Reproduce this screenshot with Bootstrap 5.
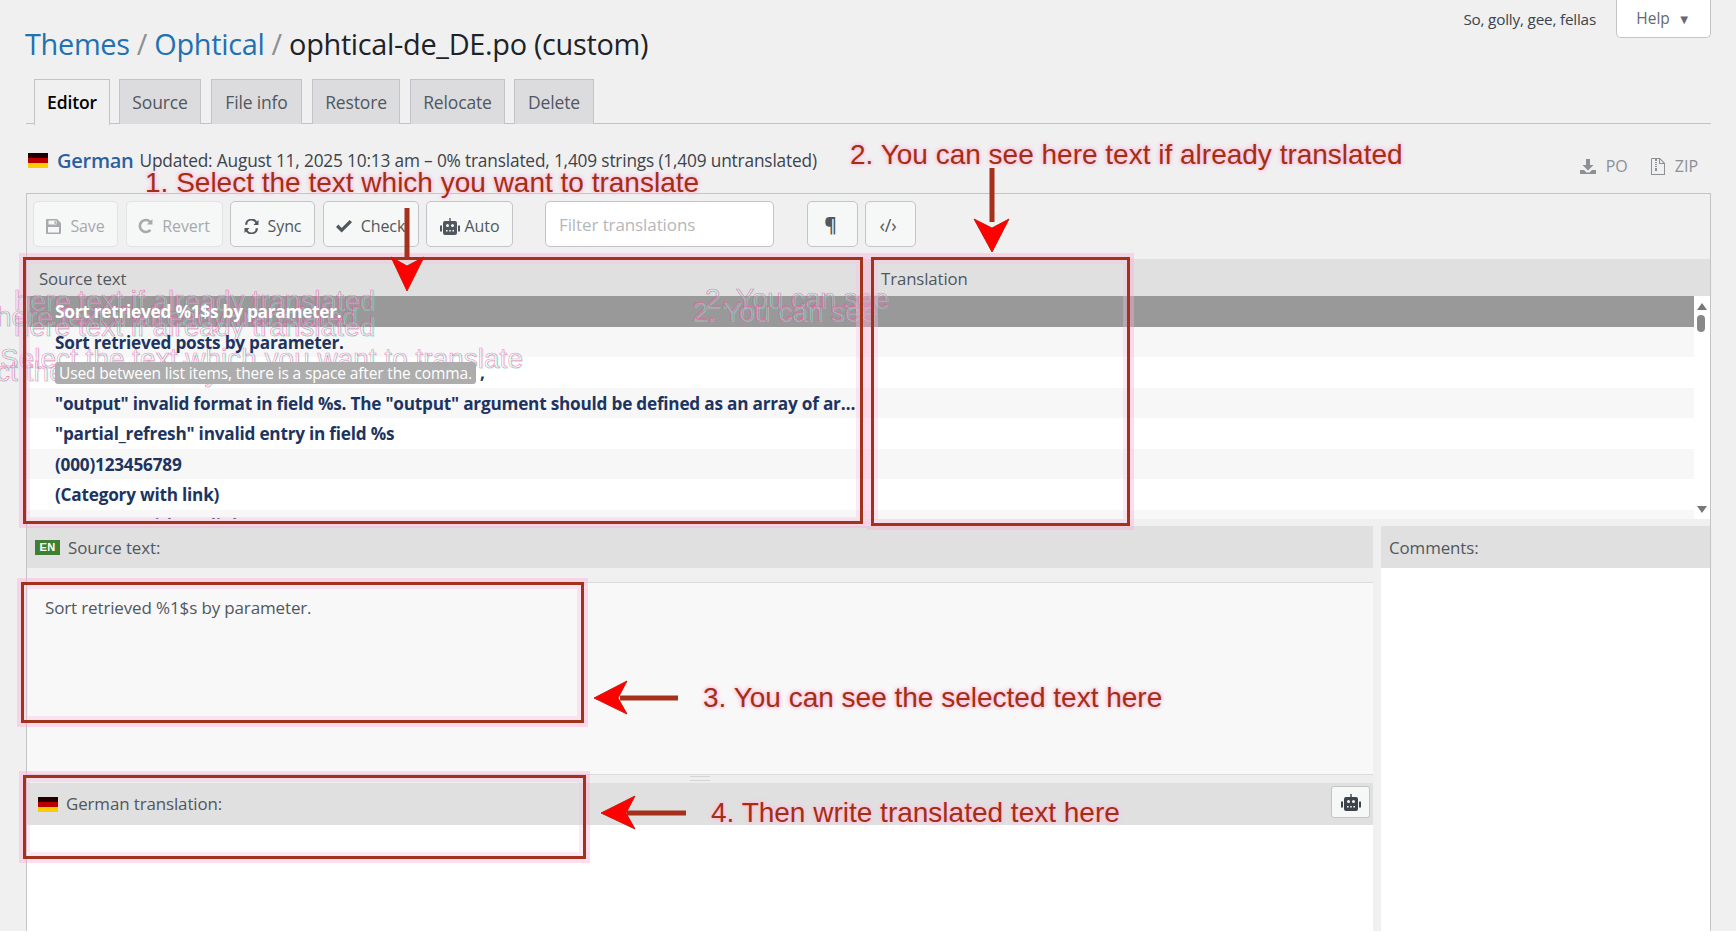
<!DOCTYPE html>
<html lang="en">
<head>
<meta charset="utf-8">
<title>Ophtical translation editor</title>
<link href="https://cdn.jsdelivr.net/npm/bootstrap@5.3.0/dist/css/bootstrap.min.css" rel="stylesheet">
<style>
html,body{background:#fff;margin:0}
body{font-family:"Open Sans","Noto Sans",sans-serif;color:#3c434a;overflow:hidden}
.shell{position:relative;height:931px;background:#f0f0f1;padding:0 25px 0 26px;overflow:hidden}
.topline{height:79px}
.crumbs{font-size:28.9px;line-height:40px;margin:24px 0 0 -1px;font-weight:400;letter-spacing:-.32px;color:#1d2327}
.crumbs a{color:#2271b1;text-decoration:none}
.crumbs i{font-style:normal;color:#8c8f94}
.who{font-size:15.3px;letter-spacing:-.2px;margin-top:8px;color:#3c434a}
.helpbtn{width:95px;height:38px;margin-left:20px;margin-top:0;background:#fff;border:1px solid #c3c4c7;border-top:0;border-radius:0 0 5px 5px;color:#646970;font-size:15.5px;line-height:37px;text-align:center;text-decoration:none}
.helpbtn small{font-size:13px;margin-left:4px}
.tabrow{border-bottom:1px solid #c3c4c7;padding-left:8px;height:45px;gap:9px;flex-wrap:nowrap}
.tabrow .nav-link{height:45px;margin-bottom:0;background:#dcdcde;border:1px solid #c3c4c7;border-bottom:0;border-radius:0;color:#50575e;font-size:17.5px;font-weight:500;padding:0;text-align:center;line-height:44px;letter-spacing:-.15px}
.tabrow .nav-link.active{background:#f0f0f1;color:#000;font-weight:600;height:46px;border-color:#c3c4c7}
.tw1{width:76px}.tw2{width:82px}.tw3{width:91px;margin-left:1px}.tw4{width:88px;margin-left:1px}.tw5{width:95px;margin-left:1px}.tw6{width:80px}
.localeline{height:69px;padding-top:24px}
.flagde{display:block;width:20px;height:15px;background:linear-gradient(#200 0 33%,#b00 33% 66%,#fc0 66%)}
.flaglead{margin:5px 0 0 2px}
.langname{font-size:20px;font-weight:600;color:#2c5f9e;margin:0 6px 0 9px;letter-spacing:-.25px;line-height:26px}
.metatext{font-size:17.28px;letter-spacing:-.17px;color:#3c434a;line-height:26px}
.dlwrap{margin-top:6px}
.dl{color:#8c8f94;font-size:16px;text-decoration:none;margin-right:13px;gap:10px}
.dl + .dl{margin-left:10px}
.dl svg,.tool svg{fill:currentColor}
.paneltop{height:66px;padding:7px 0 0 6px;border-top:1px solid #c3c4c7;border-left:1px solid #c3c4c7;border-right:1px solid #c3c4c7;gap:7.5px}
.tool{height:46px;background:#f6f7f7;border:1px solid #c3c4c7;border-radius:5px;color:#50575e;font-size:16px;padding:4px 0 0;--bs-btn-hover-bg:#f6f7f7;gap:9px;letter-spacing:-.1px}
.tool.off{color:#a7aaad;border-color:#e2e3e4;opacity:1}
.bw-save{width:85px}.bw-revert{width:97px}.bw-sync{width:85px}.bw-check{width:96px}.bw-auto{width:87px;gap:5px}.bw-sq{width:51px;font-size:18px;padding-top:2px}
.bw-para{padding-right:4px;font-size:19px}
.bw-code{margin-left:-1px;padding-right:4px}
.filterbox{width:229px;height:46px;margin:0 25.500px 0 24.500px;border:1px solid #c3c4c7;border-radius:5px;font-size:17px;padding:0 13px 0;letter-spacing:-.1px;box-shadow:none}
.filterbox::placeholder{color:#b5b7ba}
.gridbox{border-left:1px solid #c3c4c7;border-right:1px solid #c3c4c7}
.gridhead{height:37px;background:#e0e0e0;font-size:16.8px;color:#50575e;letter-spacing:-.1px;line-height:40px}
.colsrc{width:842px;padding-left:12px}
.coltr{padding-left:12px}
.gridbody{height:223px;overflow:hidden;background:#fff;position:relative}
.gridrows{width:1668px}
.tr-row{height:30.5px;line-height:32px;padding:0 0 0 28px;font-size:17.2px;font-weight:700;color:#1d3461;letter-spacing:-.22px;white-space:nowrap;overflow:hidden}
.tr-row:nth-child(even){background:#f7f7f7}
.tr-row.sel{background:#999;color:#fff}
.srccell{display:block;position:relative;z-index:2;width:806px;overflow:hidden;text-overflow:ellipsis}
.ctx{display:inline-block;background:#adadad;color:#fff;font-size:15.5px;font-weight:400;line-height:22px;border-radius:3px;padding:0 4px;letter-spacing:-.14px;vertical-align:0}
.scrolltrack{position:absolute;right:0;top:0;bottom:0;width:16px;background:#fff}
.sb-up,.sb-down{position:absolute;left:3px;width:0;height:0;border-left:5px solid transparent;border-right:5px solid transparent}
.sb-up{top:7px;border-bottom:7px solid #777}
.sb-down{bottom:6px;border-top:7px solid #777}
.sb-thumb{position:absolute;left:3px;top:19px;width:8px;height:17px;background:#888;border-radius:4px}
.panes{gap:8px;padding-top:7px;height:412px;border-left:1px solid #c3c4c7;border-right:1px solid #c3c4c7}
.paneleft{width:1346px}
.paneright{width:329px;background:#fff}
.panehead{height:42px;background:#e0e0e0;font-size:16.9px;color:#50575e;padding:1px 0 0 8px;gap:8px;letter-spacing:-.1px;position:relative}
.headde{padding-left:11px;padding-top:0}
.enflag{width:25px;height:15px;background:#3f7f33;color:#fff;font:700 11px/15px "Liberation Sans",sans-serif;text-align:center;letter-spacing:.3px}
.srcstrip{height:15px;border-bottom:1px solid #dcdcde}
.srcbody{height:191px;background:#f8f8f9;padding:12px 18px;font-size:17px;color:#50575e;letter-spacing:-.14px}
.splitter{height:9px;background:#eeeeef;border-top:1px solid #dcdcde;display:flex;justify-content:center}
.splitter span{display:block;width:20px;height:5px;margin:1px 0 0 0;border-top:1px solid #d4d4d6;border-bottom:1px solid #d4d4d6}
.trbody{height:106px;background:#fff}
.robotbtn{position:absolute;right:3px;top:3px;width:39px;height:32px;background:#f6f7f7;border:1px solid #c3c4c7;border-radius:3px;color:#3c434a;padding:0}
.robotbtn svg{fill:currentColor}
.ann{position:absolute;z-index:3;font-family:"Liberation Sans",Arial,sans-serif;font-size:28px;line-height:34px;color:#a03012;white-space:nowrap;text-shadow:0 0 3px #ffb8d8,0 0 5px #ffc8e0,0 0 5px #ffc8e0}
.a1{left:145px;top:166px}.a2{left:850px;top:138px}.a3{left:703px;top:681px}.a4{left:711px;top:796px}
.markbox{position:absolute;z-index:3;border:3px solid #a0331a;box-shadow:0 0 0 4px rgba(255,170,215,.4),inset 0 0 0 4px rgba(255,190,225,.35)}
.b1{left:23px;top:257px;width:840px;height:267px}
.b2{left:871px;top:257px;width:259px;height:269px}
.b3{left:21px;top:582px;width:563px;height:141px}
.b4{left:23px;top:775px;width:563px;height:84px}
.arrows{position:absolute;z-index:3;left:0;top:0;pointer-events:none}
.ghost{position:absolute;z-index:1;font-family:"Liberation Sans",Arial,sans-serif;font-size:28px;line-height:30px;white-space:nowrap;color:transparent;-webkit-text-stroke:.6px rgba(255,70,160,.7);text-shadow:1px 1px 0 rgba(120,255,225,.4)}
.g1{left:14px;top:286px}.g2{left:-4px;top:302px}.g3{left:14px;top:312px}.g4{left:0;top:344px}.g5{left:-60px;top:357px}
.g6{left:705px;top:284px}.g7{left:692px;top:297px}
</style>
</head>
<body>
<div class="shell">
  <div class="topline d-flex justify-content-between align-items-start">
    <h1 class="crumbs"><a href="#">Themes</a> <i>/</i> <a href="#">Ophtical</a> <i>/</i> ophtical-de_DE.po (custom)</h1>
    <div class="d-flex align-items-start">
      <span class="who">So, golly, gee, fellas</span>
      <a class="helpbtn" href="#">Help <small>▼</small></a>
    </div>
  </div>
  <ul class="nav nav-tabs tabrow">
    <li class="nav-item"><a class="nav-link active tw1" href="#">Editor</a></li>
    <li class="nav-item"><a class="nav-link tw2" href="#">Source</a></li>
    <li class="nav-item"><a class="nav-link tw3" href="#">File info</a></li>
    <li class="nav-item"><a class="nav-link tw4" href="#">Restore</a></li>
    <li class="nav-item"><a class="nav-link tw5" href="#">Relocate</a></li>
    <li class="nav-item"><a class="nav-link tw6" href="#">Delete</a></li>
  </ul>
  <div class="localeline d-flex align-items-start">
    <span class="flagde flaglead"></span>
    <span class="langname">German</span>
    <span class="metatext">Updated: August 11, 2025 10:13 am – 0% translated, 1,409 strings (1,409 untranslated)</span>
    <span class="ms-auto d-flex dlwrap">
      <a class="dl d-inline-flex align-items-center" href="#"><svg width="16" height="16" viewBox="0 0 16 16"><path d="M6 1h4v6h3.500L8 12.500 2.500 7H6zM0 12h4l2.500 2.500h3L12 12h4v4H0z"/></svg>PO</a>
      <a class="dl d-inline-flex align-items-center" href="#"><svg width="14" height="17" viewBox="0 0 14 17"><path fill-rule="evenodd" d="M1 0h8l5 5v12H0V1a1 1 0 0 1 1-1zm0 1v15h12V6H8V1H6v1H4V1zm8 .6V5h3.400zM4 2h2v1H4zm0 2h2v1H4zm0 2h2v1H4zm0 2h2v1H4zm0 2h2v3H4z"/></svg>ZIP</a>
    </span>
  </div>
  <div class="paneltop d-flex align-items-start">
    <button class="btn tool off bw-save d-flex align-items-center justify-content-center" type="button"><svg width="15" height="15" viewBox="0 0 15 15"><path fill-rule="evenodd" d="M1 0h10l4 4v10a1 1 0 0 1-1 1H1a1 1 0 0 1-1-1V1a1 1 0 0 1 1-1zm1.500 1.500v4h8v-4zm6 .6h1.300v2.800H8.500zM2 8v5.500h11V8z"/></svg>Save</button>
    <button class="btn tool off bw-revert d-flex align-items-center justify-content-center" type="button"><svg width="15" height="16" viewBox="0 0 14 15"><path d="M13.500 1v5.200H8.300l1.900-1.900A4.300 4.300 0 0 0 7.300 3.100a4.400 4.400 0 1 0 3.400 7.300l1.800 1.500A6.800 6.800 0 1 1 7.300.7c2 0 3.600.8 4.700 1.800z"/></svg>Revert</button>
    <button class="btn tool bw-sync d-flex align-items-center justify-content-center" type="button"><svg width="15" height="15" viewBox="0 0 15 15"><path d="M14.500 1v5H9.500l1.900-1.900A4.200 4.200 0 0 0 3.300 5.800H1A6.600 6.600 0 0 1 13 2.500zM.5 14V9h5l-1.900 1.900a4.200 4.200 0 0 0 8.100-1.700H14A6.600 6.600 0 0 1 2 12.500z"/></svg>Sync</button>
    <button class="btn tool bw-check d-flex align-items-center justify-content-center" type="button"><svg width="16" height="14" viewBox="0 0 15 13"><path d="M5.300 12.700 0 7.400l2.200-2.200 3.100 3.100L12.800 0.800 15 3z"/></svg>Check</button>
    <button class="btn tool bw-auto d-flex align-items-center justify-content-center" type="button"><svg width="20" height="17" viewBox="0 0 20 17"><path fill-rule="evenodd" d="M9.300 0h1.400v3H15a2 2 0 0 1 2 2v10a2 2 0 0 1-2 2H5a2 2 0 0 1-2-2V5a2 2 0 0 1 2-2h4.300zM6 7.500a1.500 1.500 0 1 0 3 0 1.500 1.500 0 0 0-3 0zm5 0a1.500 1.500 0 1 0 3 0 1.500 1.500 0 0 0-3 0zM6 12v1.500h1.600V12zm3.200 0v1.500h1.600V12zm3.200 0v1.500H14V12zM0 7.500h2v6H0zm18 0h2v6h-2z"/></svg>Auto</button>
    <input class="form-control filterbox" type="text" placeholder="Filter translations">
    <button class="btn tool bw-sq bw-para" type="button"><b>¶</b></button>
    <button class="btn tool bw-sq bw-code" type="button">‹/›</button>
  </div>
  <div class="gridbox">
    <div class="gridhead d-flex"><div class="colsrc">Source text</div><div class="coltr">Translation</div></div>
    <div class="gridbody">
      <div class="gridrows">
        <div class="tr-row sel"><span class="srccell">Sort retrieved %1$s by parameter.</span></div>
        <div class="tr-row"><span class="srccell">Sort retrieved posts by parameter.</span></div>
        <div class="tr-row"><span class="srccell"><span class="ctx">Used between list items, there is a space after the comma.</span> ,</span></div>
        <div class="tr-row"><span class="srccell">"output" invalid format in field %s. The "output" argument should be defined as an array of arguments to use</span></div>
        <div class="tr-row"><span class="srccell">"partial_refresh" invalid entry in field %s</span></div>
        <div class="tr-row"><span class="srccell">(000)123456789</span></div>
        <div class="tr-row"><span class="srccell">(Category with link)</span></div>
        <div class="tr-row"><span class="srccell">(Category without link)</span></div>
      </div>
      <div class="scrolltrack"><span class="sb-up"></span><span class="sb-thumb"></span><span class="sb-down"></span></div>
    </div>
  </div>
  <div class="panes d-flex">
    <div class="paneleft">
      <div class="panehead d-flex align-items-center"><span class="enflag">EN</span><span>Source text:</span></div>
      <div class="srcstrip"></div>
      <div class="srcbody">Sort retrieved %1$s by parameter.</div>
      <div class="splitter"><span></span></div>
      <div class="panehead headde d-flex align-items-center"><span class="flagde"></span><span>German translation:</span>
        <button class="btn robotbtn d-flex align-items-center justify-content-center" type="button" aria-label="Auto"><svg width="20" height="17" viewBox="0 0 20 17"><path fill-rule="evenodd" d="M9.300 0h1.400v3H15a2 2 0 0 1 2 2v10a2 2 0 0 1-2 2H5a2 2 0 0 1-2-2V5a2 2 0 0 1 2-2h4.300zM6 7.500a1.500 1.500 0 1 0 3 0 1.500 1.500 0 0 0-3 0zm5 0a1.500 1.500 0 1 0 3 0 1.500 1.500 0 0 0-3 0zM6 12v1.500h1.600V12zm3.200 0v1.500h1.600V12zm3.200 0v1.500H14V12zM0 7.500h2v6H0zm18 0h2v6h-2z"/></svg></button>
      </div>
      <div class="trbody"></div>
    </div>
    <div class="paneright">
      <div class="panehead d-flex align-items-center">Comments:</div>
    </div>
  </div>

  <div class="ghost g1">here text if already translated</div>
  <div class="ghost g2">here text if already translated</div>
  <div class="ghost g3">here text if already translated</div>
  <div class="ghost g4">Select the text which you want to translate</div>
  <div class="ghost g5">Select the text which you want to translate</div>
  <div class="ghost g6">2. You can see</div>
  <div class="ghost g7">2. You can see</div>

  <div class="markbox b1"></div>
  <div class="markbox b2"></div>
  <div class="markbox b3"></div>
  <div class="markbox b4"></div>
  <div class="ann a1">1. Select the text which you want to translate</div>
  <div class="ann a2">2. You can see here text if already translated</div>
  <div class="ann a3">3. You can see the selected text here</div>
  <div class="ann a4">4. Then write translated text here</div>
  <svg class="arrows" width="1736" height="931" viewBox="0 0 1736 931" aria-hidden="true">
    <g fill="#a5301b" stroke="none">
      <rect x="404.500" y="208" width="5" height="52"/>
      <rect x="989.500" y="168" width="5" height="54"/>
      <rect x="620" y="695.500" width="58" height="5"/>
      <rect x="627" y="810.500" width="59" height="5"/>
    </g>
    <g fill="#f00" stroke="#a5301b" stroke-width="1" style="paint-order:stroke">
      <path d="M407 291 391 257 407 266 424 257z"/>
      <path d="M992 252 974 219 992 228 1009 219z"/>
      <path d="M594 698 627 681 618 698 627 714z"/>
      <path d="M601 813 635 796 626 813 635 829z"/>
    </g>
  </svg>
</div>
</body>
</html>
